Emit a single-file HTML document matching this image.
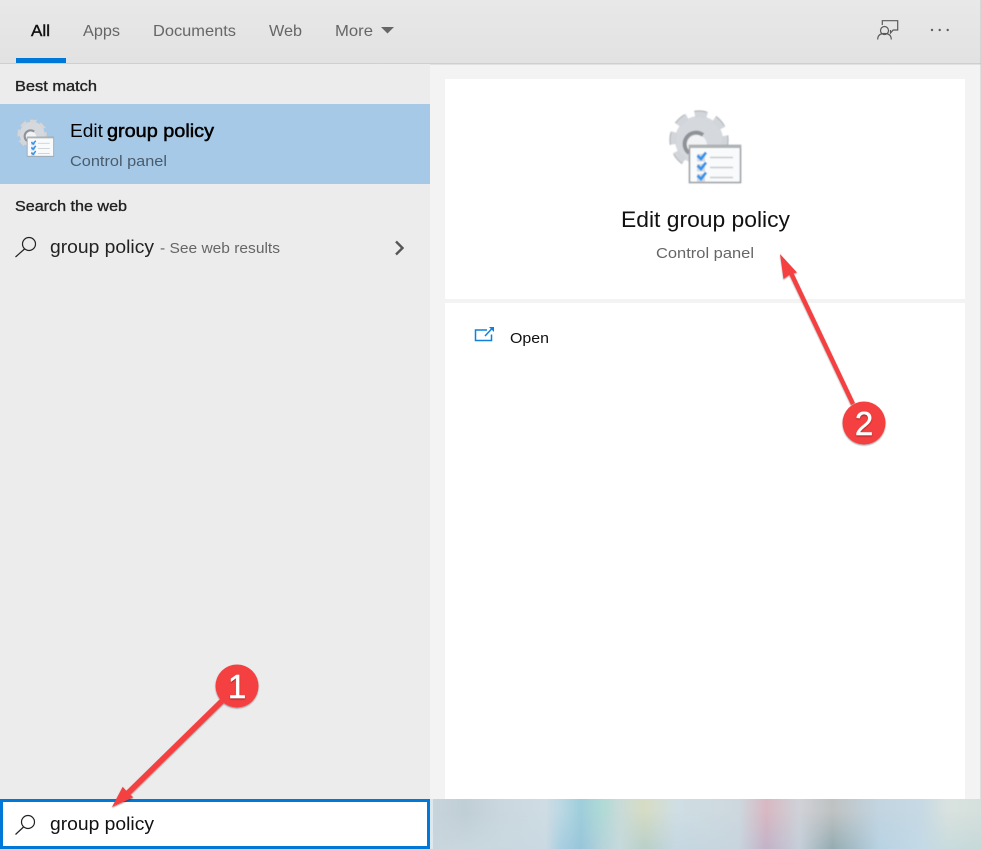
<!DOCTYPE html>
<html>
<head>
<meta charset="utf-8">
<title>Edit group policy</title>
<style>
html,body{margin:0;padding:0;width:981px;height:849px;overflow:hidden;background:#f3f3f3}
svg{position:absolute;left:0;top:0;display:block}
text{font-family:"Liberation Sans",sans-serif}
</style>
</head>
<body>
<svg width="981" height="849" viewBox="0 0 981 849" xmlns="http://www.w3.org/2000/svg">
<defs>
<linearGradient id="hd" x1="0" y1="0" x2="0" y2="1"><stop offset="0" stop-color="#e8e8e8"/><stop offset="1" stop-color="#e2e2e2"/></linearGradient>
<linearGradient id="blur" x1="430" y1="0" x2="981" y2="0" gradientUnits="userSpaceOnUse">
<stop offset="0" stop-color="#c8d5dc"/><stop offset=".064" stop-color="#c0ced5"/><stop offset=".127" stop-color="#cad7de"/><stop offset=".21" stop-color="#cfdce4"/><stop offset=".236" stop-color="#bcd8e4"/><stop offset=".274" stop-color="#9fcedb"/><stop offset=".313" stop-color="#b0dad6"/><stop offset=".345" stop-color="#c9dbd8"/><stop offset=".389" stop-color="#d6dcc4"/><stop offset=".447" stop-color="#cfdee4"/><stop offset=".56" stop-color="#cdd8de"/><stop offset=".61" stop-color="#d8b8c2"/><stop offset=".67" stop-color="#cfd2d8"/><stop offset=".73" stop-color="#bfc2c2"/><stop offset=".815" stop-color="#c2d5e1"/><stop offset=".89" stop-color="#c6d9e4"/><stop offset=".94" stop-color="#d9e2de"/><stop offset="1" stop-color="#d5e0dc"/>
</linearGradient>
<linearGradient id="blur2" x1="430" y1="0" x2="981" y2="0" gradientUnits="userSpaceOnUse">
<stop offset="0" stop-color="#c8d5dc"/><stop offset=".21" stop-color="#cad9e2"/><stop offset=".236" stop-color="#a8cfe0"/><stop offset=".274" stop-color="#98c5da"/><stop offset=".313" stop-color="#b5d3da"/><stop offset=".345" stop-color="#c6d9dc"/><stop offset=".389" stop-color="#b8cfc8"/><stop offset=".447" stop-color="#c5d7e1"/><stop offset=".56" stop-color="#c8d4dd"/><stop offset=".61" stop-color="#c2b2c8"/><stop offset=".67" stop-color="#c5ced9"/><stop offset=".73" stop-color="#93abb0"/><stop offset=".815" stop-color="#b8d2e3"/><stop offset=".89" stop-color="#c3d9e6"/><stop offset=".94" stop-color="#c8dbdd"/><stop offset="1" stop-color="#c6d8d8"/>
</linearGradient>
<linearGradient id="fade" x1="0" y1="0" x2="0" y2="1"><stop offset=".25" stop-color="#fff" stop-opacity="0"/><stop offset="1" stop-color="#fff"/></linearGradient>
<mask id="fm"><rect x="430" y="799" width="551" height="50" fill="url(#fade)"/></mask>
<filter id="sh" x="-20%" y="-20%" width="140%" height="140%"><feDropShadow dx="0" dy="1" stdDeviation=".7" flood-color="#000" flood-opacity=".4"/></filter>
<filter id="soft" x="-5%" y="-5%" width="110%" height="110%"><feGaussianBlur stdDeviation=".45"/></filter>
<symbol id="cfg" viewBox="0 0 76 82">
  <g filter="url(#soft)">
  <circle cx="31" cy="35" r="24" fill="#d5d9dd"/>
  <circle cx="31" cy="35" r="26" fill="none" stroke="#d2d6da" stroke-width="7" stroke-dasharray="12.500 7.920" stroke-dashoffset="4.500"/>
  <circle cx="31" cy="35" r="29" fill="none" stroke="#b9bec2" stroke-width="1.400" stroke-dasharray="12.500 10.280" stroke-dashoffset="5"/>
  <circle cx="29" cy="40" r="10" fill="#f2f3f4"/>
  <path d="M21 48A11 11 0 0 1 35 30" fill="none" stroke="#8f9296" stroke-width="4"/>
  <rect x="21.500" y="40.500" width="51" height="37" fill="#f9fafb" stroke="#9da1a5" stroke-width="1.600"/>
  <rect x="21" y="40" width="52" height="3" fill="#aeb2b5"/>
  <rect x="29" y="49" width="8" height="7.500" fill="#d4d9de"/><rect x="29" y="59" width="8" height="7.500" fill="#d4d9de"/><rect x="29" y="69" width="8" height="7.500" fill="#d4d9de"/>
  <path d="M29.500 50.500l3.500 3.500 5-6.500M29.500 60.500l3.500 3.500 5-6.500M29.500 70.500l3.500 3.500 5-6.500" fill="none" stroke="#2f93ec" stroke-width="2.800"/>
  <path d="M42 52.500H65M42 62.500H65M42 72.500H65" stroke="#c6cacd" stroke-width="1.400"/>
  </g>
</symbol>
</defs>

<!-- backgrounds -->
<rect width="981" height="849" fill="#f3f3f3"/>
<rect width="981" height="63" fill="url(#hd)"/>
<rect y="63" width="981" height="1.500" fill="#cfcfcf"/>
<rect y="64" width="430" height="735" fill="#ececec"/>
<rect x="445" y="79" width="520" height="220" fill="#fff"/>
<rect x="445" y="303" width="520" height="496" fill="#fff"/>
<rect x="980" y="0" width="1" height="799" fill="#b8b8b8" opacity=".35"/>

<!-- tabs -->
<text x="31" y="36" font-size="16" fill="#111" stroke="#111" stroke-width=".4" textLength="19" lengthAdjust="spacingAndGlyphs">All</text>
<text x="83" y="36" font-size="16" fill="#666" textLength="37" lengthAdjust="spacingAndGlyphs">Apps</text>
<text x="153" y="36" font-size="16" fill="#666" textLength="83" lengthAdjust="spacingAndGlyphs">Documents</text>
<text x="269" y="36" font-size="16" fill="#666" textLength="33" lengthAdjust="spacingAndGlyphs">Web</text>
<text x="335" y="36" font-size="16" fill="#666" textLength="38" lengthAdjust="spacingAndGlyphs">More</text>
<path d="M381 27h13l-6.500 6.500z" fill="#666"/>
<rect x="16" y="58" width="50" height="5" fill="#0078d7"/>

<!-- header icons -->
<g fill="none" stroke="#5a5a5a" stroke-width="1.200">
  <circle cx="884.500" cy="30.500" r="4"/>
  <path d="M877.700 39.500c0-4.500 3-6 6.800-6s6.800 1.500 6.800 6"/>
  <path d="M882.300 25v-4.300h15.400v9.300h-4.500l-2.700 3v-3"/>
</g>
<g fill="#5f5f5f"><circle cx="932" cy="30" r="1.200"/><circle cx="939.700" cy="30" r="1.200"/><circle cx="947.700" cy="30" r="1.200"/></g>

<!-- results list -->
<text x="15" y="91" font-size="15" fill="#222" stroke="#222" stroke-width=".35" textLength="82" lengthAdjust="spacingAndGlyphs">Best match</text>
<rect y="104" width="430" height="80" fill="#a6c9e7"/>
<use href="#cfg" x="16" y="116" width="39.500" height="42.600"/>
<text x="70" y="137" font-size="18" fill="#000" textLength="33" lengthAdjust="spacingAndGlyphs">Edit</text>
<text x="107" y="137" font-size="18" fill="#000" stroke="#000" stroke-width=".5" textLength="107" lengthAdjust="spacingAndGlyphs">group policy</text>
<text x="70" y="166" font-size="15" fill="#4a5c6b" textLength="97" lengthAdjust="spacingAndGlyphs">Control panel</text>
<text x="15" y="211" font-size="15" fill="#222" stroke="#222" stroke-width=".35" textLength="112" lengthAdjust="spacingAndGlyphs">Search the web</text>

<g fill="none" stroke="#222" stroke-width="1.200">
  <circle cx="29" cy="244" r="6.500"/><path d="M24.500 249L15.500 257"/>
</g>
<text x="50" y="253" font-size="18" fill="#222" textLength="104" lengthAdjust="spacingAndGlyphs">group policy</text>
<text x="160" y="253" font-size="15" fill="#666" textLength="120" lengthAdjust="spacingAndGlyphs">- See web results</text>
<path d="M396 241.500l6.500 6.500-6.500 6.500" fill="none" stroke="#555" stroke-width="2.400"/>

<!-- preview pane -->
<use href="#cfg" x="668" y="105" width="76" height="82"/>
<text x="621" y="227" font-size="22" fill="#111" textLength="169" lengthAdjust="spacingAndGlyphs">Edit group policy</text>
<text x="656" y="258" font-size="15" fill="#666" textLength="98" lengthAdjust="spacingAndGlyphs">Control panel</text>
<g fill="none" stroke="#0f80dc" stroke-width="1.500">
  <path d="M487 330h-11.500v10.500h16v-6"/>
  <path d="M485 336l7-7.500"/>
</g>
<path d="M489 327h5v5z" fill="#0f80dc"/>
<text x="510" y="343" font-size="15" fill="#111" textLength="39" lengthAdjust="spacingAndGlyphs">Open</text>

<!-- blurred strip -->
<rect x="430" y="799" width="551" height="50" fill="url(#blur)"/>
<rect x="430" y="799" width="551" height="50" fill="url(#blur2)" mask="url(#fm)"/>
<rect x="430" y="799" width="3" height="50" fill="#dce7ee"/>

<!-- search box -->
<rect x="1.500" y="800.500" width="427" height="47" fill="#fff" stroke="#0078d7" stroke-width="3"/>
<g fill="none" stroke="#222" stroke-width="1.200">
  <circle cx="28" cy="822" r="6.500"/><path d="M23.500 827L15.500 834.500"/>
</g>
<text x="50" y="830" font-size="18" fill="#111" textLength="104" lengthAdjust="spacingAndGlyphs">group policy</text>

<!-- annotations -->
<g filter="url(#sh)">
  <path d="M220 699L224 703L130 795L126 791Z" fill="#f44040"/>
  <path d="M112 807L122.700 786.700L127 791.500L133.300 797.300Z" fill="#f44040"/>
  <circle cx="237" cy="686" r="21.500" fill="#f44040"/>
  <path d="M851 405L855 403L793 272L789 274Z" fill="#f44040"/>
  <path d="M780 254L783.500 279L790.500 274L797 272.500Z" fill="#f44040"/>
  <circle cx="864" cy="423" r="21.500" fill="#f44040"/>
</g>
<text x="237" y="698" font-size="33" fill="#fff" stroke="#fff" stroke-width=".4" text-anchor="middle" filter="url(#sh)">1</text>
<text x="864" y="435" font-size="33" fill="#fff" stroke="#fff" stroke-width=".4" text-anchor="middle" filter="url(#sh)">2</text>
</svg>
</body>
</html>
